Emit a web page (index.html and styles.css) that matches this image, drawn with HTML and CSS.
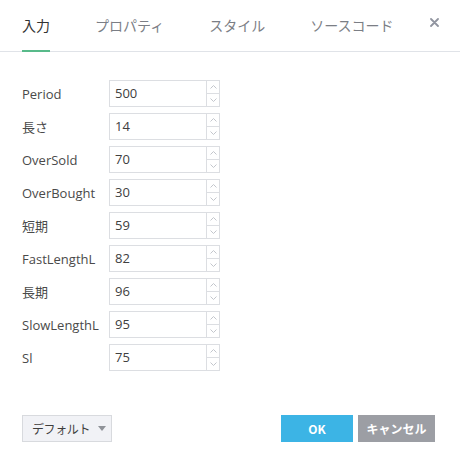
FILE: index.html
```html
<!DOCTYPE html>
<html lang="ja">
<head>
<meta charset="utf-8">
<link rel="stylesheet" href="styles.css">
</head>
<body>
<div class="dialog">
  <div class="tabs">
    <div class="tab active">入力</div>
    <div class="tab">プロパティ</div>
    <div class="tab">スタイル</div>
    <div class="tab">ソースコード</div>
    <div class="close"><svg width="9" height="9" viewBox="0 0 9 9"><path d="M1 1L8 8M8 1L1 8" stroke="#9195a0" stroke-width="1.8" stroke-linecap="round"/></svg></div>
  </div>
  <div class="form">
    <div class="row"><div class="label">Period</div><div class="field"><div class="value">500</div><div class="spin"><div class="up"><svg width="7" height="4" viewBox="0 0 7 4"><path d="M0.5 3.5L3.5 0.5L6.5 3.5" fill="none" stroke="#c3c6cc" stroke-width="1"/></svg></div><div class="down"><svg width="7" height="4" viewBox="0 0 7 4"><path d="M0.5 0.5L3.5 3.5L6.5 0.5" fill="none" stroke="#c3c6cc" stroke-width="1"/></svg></div></div></div></div>
    <div class="row"><div class="label">長さ</div><div class="field"><div class="value">14</div><div class="spin"><div class="up"><svg width="7" height="4" viewBox="0 0 7 4"><path d="M0.5 3.5L3.5 0.5L6.5 3.5" fill="none" stroke="#c3c6cc" stroke-width="1"/></svg></div><div class="down"><svg width="7" height="4" viewBox="0 0 7 4"><path d="M0.5 0.5L3.5 3.5L6.5 0.5" fill="none" stroke="#c3c6cc" stroke-width="1"/></svg></div></div></div></div>
    <div class="row"><div class="label">OverSold</div><div class="field"><div class="value">70</div><div class="spin"><div class="up"><svg width="7" height="4" viewBox="0 0 7 4"><path d="M0.5 3.5L3.5 0.5L6.5 3.5" fill="none" stroke="#c3c6cc" stroke-width="1"/></svg></div><div class="down"><svg width="7" height="4" viewBox="0 0 7 4"><path d="M0.5 0.5L3.5 3.5L6.5 0.5" fill="none" stroke="#c3c6cc" stroke-width="1"/></svg></div></div></div></div>
    <div class="row"><div class="label">OverBought</div><div class="field"><div class="value">30</div><div class="spin"><div class="up"><svg width="7" height="4" viewBox="0 0 7 4"><path d="M0.5 3.5L3.5 0.5L6.5 3.5" fill="none" stroke="#c3c6cc" stroke-width="1"/></svg></div><div class="down"><svg width="7" height="4" viewBox="0 0 7 4"><path d="M0.5 0.5L3.5 3.5L6.5 0.5" fill="none" stroke="#c3c6cc" stroke-width="1"/></svg></div></div></div></div>
    <div class="row"><div class="label">短期</div><div class="field"><div class="value">59</div><div class="spin"><div class="up"><svg width="7" height="4" viewBox="0 0 7 4"><path d="M0.5 3.5L3.5 0.5L6.5 3.5" fill="none" stroke="#c3c6cc" stroke-width="1"/></svg></div><div class="down"><svg width="7" height="4" viewBox="0 0 7 4"><path d="M0.5 0.5L3.5 3.5L6.5 0.5" fill="none" stroke="#c3c6cc" stroke-width="1"/></svg></div></div></div></div>
    <div class="row"><div class="label">FastLengthL</div><div class="field"><div class="value">82</div><div class="spin"><div class="up"><svg width="7" height="4" viewBox="0 0 7 4"><path d="M0.5 3.5L3.5 0.5L6.5 3.5" fill="none" stroke="#c3c6cc" stroke-width="1"/></svg></div><div class="down"><svg width="7" height="4" viewBox="0 0 7 4"><path d="M0.5 0.5L3.5 3.5L6.5 0.5" fill="none" stroke="#c3c6cc" stroke-width="1"/></svg></div></div></div></div>
    <div class="row"><div class="label">長期</div><div class="field"><div class="value">96</div><div class="spin"><div class="up"><svg width="7" height="4" viewBox="0 0 7 4"><path d="M0.5 3.5L3.5 0.5L6.5 3.5" fill="none" stroke="#c3c6cc" stroke-width="1"/></svg></div><div class="down"><svg width="7" height="4" viewBox="0 0 7 4"><path d="M0.5 0.5L3.5 3.5L6.5 0.5" fill="none" stroke="#c3c6cc" stroke-width="1"/></svg></div></div></div></div>
    <div class="row"><div class="label">SlowLengthL</div><div class="field"><div class="value">95</div><div class="spin"><div class="up"><svg width="7" height="4" viewBox="0 0 7 4"><path d="M0.5 3.5L3.5 0.5L6.5 3.5" fill="none" stroke="#c3c6cc" stroke-width="1"/></svg></div><div class="down"><svg width="7" height="4" viewBox="0 0 7 4"><path d="M0.5 0.5L3.5 3.5L6.5 0.5" fill="none" stroke="#c3c6cc" stroke-width="1"/></svg></div></div></div></div>
    <div class="row"><div class="label">Sl</div><div class="field"><div class="value">75</div><div class="spin"><div class="up"><svg width="7" height="4" viewBox="0 0 7 4"><path d="M0.5 3.5L3.5 0.5L6.5 3.5" fill="none" stroke="#c3c6cc" stroke-width="1"/></svg></div><div class="down"><svg width="7" height="4" viewBox="0 0 7 4"><path d="M0.5 0.5L3.5 3.5L6.5 0.5" fill="none" stroke="#c3c6cc" stroke-width="1"/></svg></div></div></div></div>
  </div>
  <div class="footer">
    <div class="default"><span class="default-text">デフォルト</span><span class="caret"></span></div>
    <div class="actions">
      <div class="btn ok">OK</div>
      <div class="btn cancel">キャンセル</div>
    </div>
  </div>
</div>
</body>
</html>
```

FILE: styles.css
```css
html, body {
  margin: 0;
  padding: 0;
  background: #fff;
}
body {
  font-family: "Open Sans", "Noto Sans CJK JP", sans-serif;
  color: #4a4a4a;
  width: 460px;
  height: 465px;
  overflow: hidden;
}
.tabs {
  display: flex;
  height: 51px;
  border-bottom: 1px solid #e0e3e8;
  padding-left: 22px;
}
.tab {
  height: 50px;
  line-height: 50px;
  margin-right: 45px;
  font-size: 14px;
  color: #7b7e85;
  border-bottom: 2px solid transparent;
  margin-bottom: -1px;
  font-family: "Noto Sans CJK JP", sans-serif;
}
.tab.active {
  color: #333;
  border-bottom-color: #58ba8a;
}
.tab:nth-child(4) {
  margin-right: 0;
}
.close {
  margin-left: auto;
  margin-right: 21px;
  margin-top: 18px;
  width: 9px;
  height: 9px;
  display: flex;
}
.form {
  padding: 28px 0 0 22px;
  display: flex;
  flex-direction: column;
  gap: 6px;
}
.row {
  display: flex;
  align-items: center;
  height: 27px;
}
.label {
  width: 87px;
  font-size: 13px;
  color: #4a4a4a;
}
.field {
  display: flex;
  height: 27px;
}
.value {
  width: 91px;
  height: 25px;
  border: 1px solid #dcdee2;
  line-height: 25px;
  padding-left: 5px;
  font-size: 13px;
  color: #404040;
}
.spin {
  width: 12px;
  height: 25px;
  border: 1px solid #dcdee2;
  border-left: none;
  display: flex;
  flex-direction: column;
}
.up, .down {
  flex: 1;
  display: flex;
  align-items: center;
  justify-content: center;
}
.up {
  border-bottom: 1px solid #dcdee2;
}
.footer {
  display: flex;
  justify-content: space-between;
  padding: 0 25px 0 22px;
  margin-top: 44px;
}
.default {
  box-sizing: border-box;
  width: 90px;
  height: 27px;
  border: 1px solid #d8dade;
  background: #f1f2f6;
  font-size: 12px;
  color: #3e3e3e;
  display: flex;
  align-items: center;
  padding-left: 9px;
  white-space: nowrap;
  font-family: "Noto Sans CJK JP", sans-serif;
}
.default-text {
  letter-spacing: -0.4px;
}
.caret {
  margin-left: 8px;
  width: 0;
  height: 0;
  border-left: 4px solid transparent;
  border-right: 4px solid transparent;
  border-top: 5px solid #8f9298;
}
.actions {
  display: flex;
  gap: 5px;
}
.btn {
  height: 27px;
  line-height: 27px;
  text-align: center;
  color: #fff;
  font-weight: bold;
  font-size: 12px;
  font-family: "Noto Sans CJK JP", sans-serif;
}
.ok {
  width: 72px;
  background: #3cb4e5;
}
.cancel {
  width: 77px;
  background: #9c9ea4;
}
```
